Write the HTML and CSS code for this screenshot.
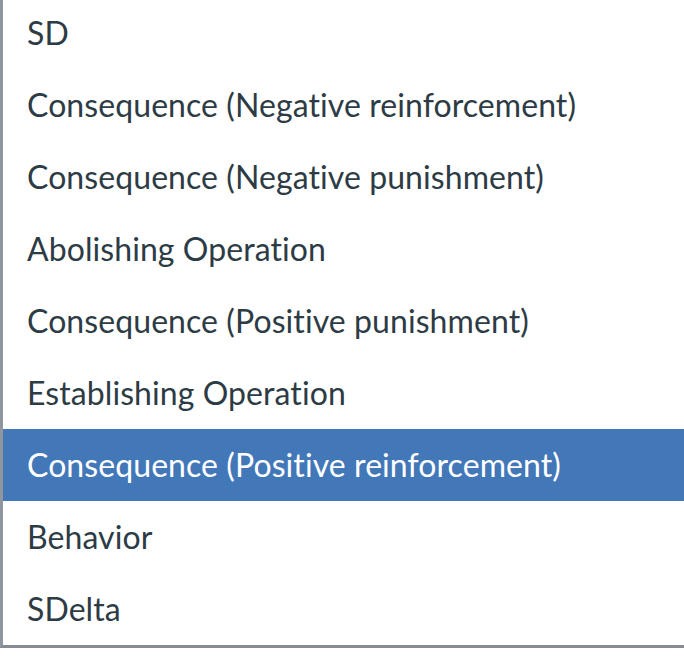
FILE: index.html
```html
<!DOCTYPE html>
<html lang="en">
<head>
  <meta charset="UTF-8" />
  <title>Options</title>
  <link rel="stylesheet" href="styles.css">
</head>
<body>
  <ul class="listbox">
    <li class="option">SD</li>
    <li class="option">Consequence (Negative reinforcement)</li>
    <li class="option">Consequence (Negative punishment)</li>
    <li class="option">Abolishing Operation</li>
    <li class="option">Consequence (Positive punishment)</li>
    <li class="option">Establishing Operation</li>
    <li class="option selected">Consequence (Positive reinforcement)</li>
    <li class="option">Behavior</li>
    <li class="option">SDelta</li>
  </ul>
</body>
</html>
```

FILE: styles.css
```css
html, body {
  margin: 0;
  padding: 0;
  background: #fff;
  overflow: hidden;
}
.listbox {
  list-style: none;
  margin: -3px 0 0 0;
  padding: 0;
  border-left: 3px solid #8f969d;
  border-bottom: 3px solid #858c93;
  box-shadow: 0 2px 3px rgba(0, 0, 0, 0.12);
  font-family: Lato, 'Open Sans', sans-serif;
  font-size: 32px;
  font-variant-ligatures: none;
  letter-spacing: 0.08px;
  color: #2d3b45;
}
.option {
  height: 72px;
  line-height: 72px;
  padding-left: 24px;
  white-space: nowrap;
}
.selected {
  background: #4277b8;
  color: #fff;
}
```
